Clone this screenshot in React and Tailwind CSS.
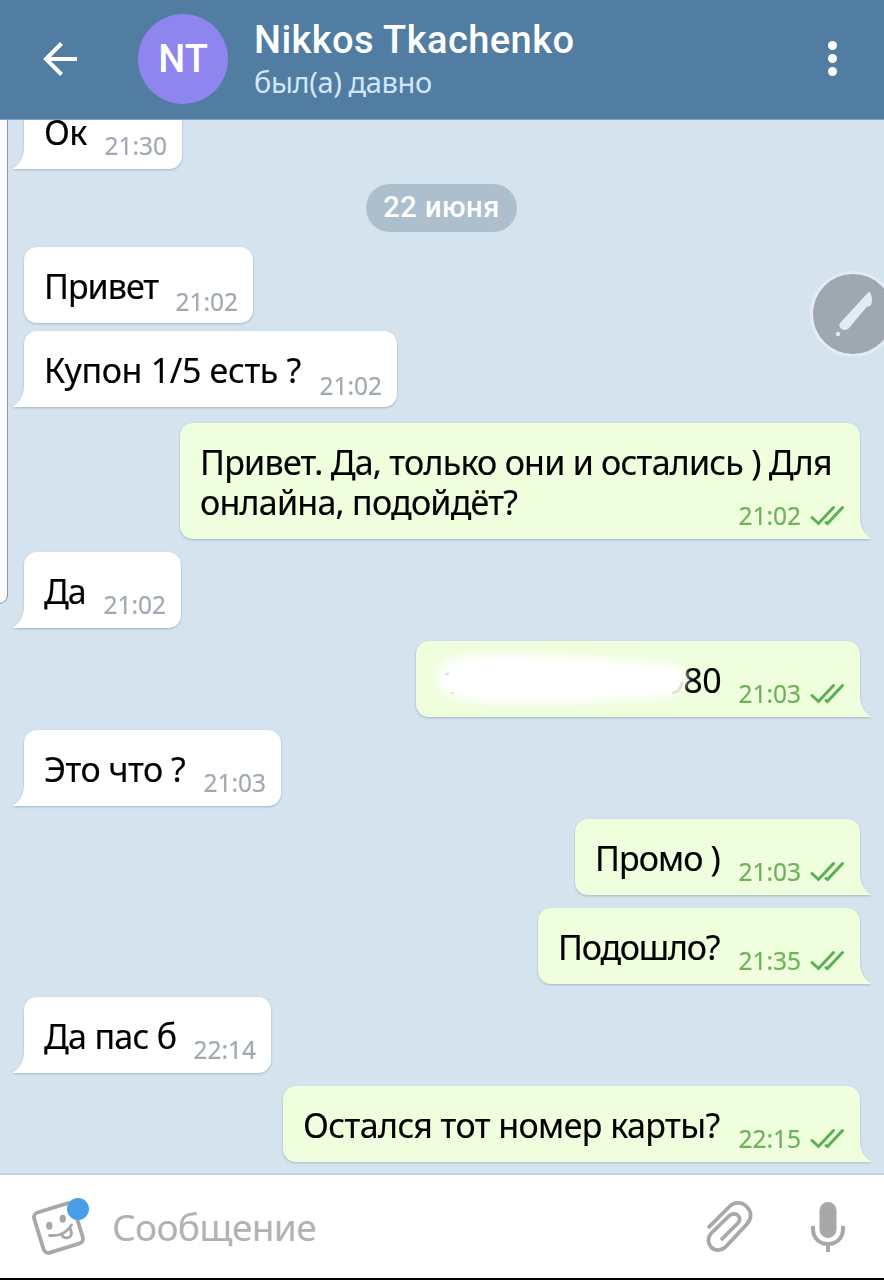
import React from 'react';

const messages = [
  { id: 1, text: 'Привет', time: '21:02', box: 'mt-[15px] w-[229px] h-[76px] tracking-[-1px]', low: true },
  { id: 2, text: 'Купон 1/5 есть ?', time: '21:02', tail: true, box: 'mt-[8px] w-[373px] h-[76px] tracking-[-0.35px]', low: true },
  { id: 3, text: 'Привет. Да, только они и остались ) Для онлайна, подойдёт?', time: '21:02', out: true, tail: true, wide: true, box: 'mt-[16px] w-[680px] h-[116px] tracking-[-0.75px]' },
  { id: 4, text: 'Да', time: '21:02', tail: true, box: 'mt-[13px] w-[157px] h-[76px] tracking-[-1px]' },
  { id: 5, text: '80', time: '21:03', out: true, tail: true, hidden: true, box: 'mt-[13px] w-[444px] h-[76px] tracking-[-0.4px]' },
  { id: 6, text: 'Это что ?', time: '21:03', tail: true, box: 'mt-[13px] w-[257px] h-[76px] tracking-[-0.5px]' },
  { id: 7, text: 'Промо )', time: '21:03', out: true, tail: true, box: 'mt-[13px] w-[285px] h-[76px] tracking-[-0.9px]' },
  { id: 8, text: 'Подошло?', time: '21:35', out: true, tail: true, box: 'mt-[13px] w-[322px] h-[76px] tracking-[-1.2px]' },
  { id: 9, text: 'Да пас б', time: '22:14', tail: true, box: 'mt-[13px] w-[247px] h-[76px] tracking-[-0.7px]' },
  { id: 10, text: 'Остался тот номер карты?', time: '22:15', out: true, tail: true, box: 'mt-[13px] w-[577px] h-[76px] tracking-[-0.58px]' },
];

const Checks = () => (
  <svg width="35" height="22" viewBox="0 0 35 22" fill="none" stroke="#5bb055" strokeWidth="3" strokeLinecap="round" className="ml-[9px] mb-[1px]">
    <path d="M2 12.500 L8.500 18.500 L23.500 2.500" />
    <path d="M16 17.500 L17.500 18.500 L32.500 2.500" />
  </svg>
);

const Tail = ({ out }) => (
  <svg
    width="13"
    height="22"
    viewBox="0 0 13 22"
    className={out ? 'absolute -right-[12px] bottom-0' : 'absolute -left-[12px] bottom-0 -scale-x-100'}
  >
    <path d="M0 0 H1 C1 10 5 17 12.5 22 H0 Z" fill={out ? '#effedd' : '#ffffff'} />
  </svg>
);

// White smear that covers the promo code
const Smear = () => (
  <svg width="290" height="76" viewBox="0 0 290 76" className="absolute left-[6px] top-0">
    <defs>
      <filter id="smear" x="-10%" y="-30%" width="120%" height="160%">
        <feGaussianBlur stdDeviation="4.5" />
      </filter>
    </defs>
    <path d="M27 19 C60 10 100 13 150 16 C200 19 245 19 262 29 C270 39 262 54 238 57 C190 60 90 65 50 60 C20 55 12 46 15 36 C17 28 20 21 27 19 Z" fill="#fff" filter="url(#smear)" />
    <path d="M250 52 Q259 51 260 41" fill="none" stroke="#777" strokeOpacity=".2" strokeWidth="3" />
    <path d="M23 34 L27 32" stroke="#999" strokeOpacity=".3" strokeWidth="2" />
    <path d="M29 52 h3" stroke="#999" strokeOpacity=".25" strokeWidth="2" />
  </svg>
);

const Message = ({ msg }) => {
  const { out, tail } = msg;
  const corner = !tail ? '' : out ? 'rounded-br-none' : 'rounded-bl-none';

  return (
    <div className={`flex px-6 ${out ? 'justify-end' : ''}`}>
      <div
        className={`relative flex justify-between rounded-[13px] pl-[20px] pr-[15px] drop-shadow-[0_1.5px_0.8px_rgba(110,140,160,0.5)] ${corner} ${out ? 'bg-[#effedd]' : 'bg-white'} ${msg.box}`}
      >
        <p className={`pt-[19px] text-[34px] leading-[40px] text-black [-webkit-text-stroke:0.15px_black] ${msg.wide ? 'w-[640px] shrink-0' : 'whitespace-nowrap'} ${msg.hidden ? 'ml-auto mr-[17px]' : ''}`}>
          {msg.text}
        </p>
        {msg.hidden && <Smear />}
        <div className={`flex items-end self-end text-[24.5px] leading-[24px] tracking-normal whitespace-nowrap ${msg.low ? 'pb-[9px]' : 'pb-[11px]'} ${msg.wide ? '-ml-[200px]' : ''} ${out ? 'text-[#70b15c] [-webkit-text-stroke:0.2px_#70b15c]' : 'text-[#a1aab3] [-webkit-text-stroke:0.2px_#a1aab3]'}`}>
          <span>{msg.time}</span>
          {out && <Checks />}
        </div>
        {tail && <Tail out={out} />}
      </div>
    </div>
  );
};

const Header = () => (
  <header className="relative z-10 flex h-[120px] shrink-0 items-center border-b border-[#7d9fba] bg-[#517da2] pr-[47px] pb-[2px] font-['Roboto',sans-serif] text-white">
    <svg width="36" height="36" viewBox="0 0 36 36" fill="none" stroke="#fff" strokeWidth="4" className="ml-[42px]">
      <path d="M35 18 H4 M19.5 2.5 L4 18 L19.5 33.5" />
    </svg>
    <div className="ml-[60px] flex h-[90px] w-[90px] items-center justify-center rounded-full bg-[#8e85ee] pt-[2px] text-[38px] font-medium">
      NT
    </div>
    <div className="ml-[26px] flex-1 pt-[3px]">
      <h1 className="text-[38px] leading-[44px] font-medium tracking-[0.45px] whitespace-nowrap">Nikkos Tkachenko</h1>
      <p className="text-[29px] leading-[40px] tracking-[-0.4px] text-[#d0e7fb] font-['Noto_Sans',sans-serif]">был(а) давно</p>
    </div>
    <div className="flex flex-col gap-[4px]">
      <span className="h-[9px] w-[9px] rounded-full bg-white" />
      <span className="h-[9px] w-[9px] rounded-full bg-white" />
      <span className="h-[9px] w-[9px] rounded-full bg-white" />
    </div>
  </header>
);

const PenButton = () => (
  <div className="absolute top-[151px] left-[810px] h-[86px] w-[86px] rounded-full border-[3px] border-[#e3ecf4] bg-[#9fa8b1]">
    <svg width="80" height="80" viewBox="0 0 80 80" fill="#e3ecf4">
      <path d="M56 17.500 C59 20 59.500 26 58.500 29.500 C58 32 56 32.500 54 32.500 L36 54 C31 59 23.500 53.500 27.500 48.500 Z" />
      <circle cx="25" cy="60" r="2.200" />
    </svg>
  </div>
);

const Composer = () => (
  <footer className="flex h-[107px] shrink-0 items-center border-t-2 border-b-2 border-t-[#c5d3df] border-b-black bg-white">
    <svg width="60" height="60" viewBox="0 0 60 60" fill="none" stroke="#a8a8a8" strokeWidth="3.8" strokeLinecap="round" className="ml-[31px]">
      <rect x="7" y="10" width="41" height="42" rx="5" transform="rotate(-17 27.500 31)" />
      <path d="M18.500 38.500 Q33 40 40.500 28" strokeWidth="2.800" />
      <path d="M31 38 C33 43 40.500 41 40.500 36 L39.500 32" strokeWidth="2.800" />
      <ellipse cx="18.300" cy="28.700" rx="3.200" ry="4" fill="#a8a8a8" stroke="none" />
      <ellipse cx="31.800" cy="21.700" rx="3.200" ry="4" fill="#a8a8a8" stroke="none" />
      <circle cx="47" cy="12" r="11" fill="#489fe8" stroke="none" />
    </svg>
    <span className="ml-[21px] flex-1 text-[37px] leading-[50px] tracking-[-0.6px] text-[#b2b2b2]">Сообщение</span>
    <svg width="48" height="54" viewBox="0 0 48 54" fill="none" stroke="#a8a8a8" strokeWidth="3.800" className="mr-[56px]">
      <path d="M2 28 L22.500 7.500 C28 1.500 36 1.500 41 7 C46 12 45.500 19 41 24 L20.500 46 C15.500 51.500 8.500 51 5 47 C1.500 43 1.500 37.500 5 33.500 L22.500 16.500 C26 13 30 13.500 32 15.500 C34.500 18 34 21 32 23 L15 40" />
    </svg>
    <svg width="36" height="52" viewBox="0 0 36 52" fill="none" stroke="#a8a8a8" strokeWidth="4" className="mr-[38px]">
      <rect x="9.500" y="1" width="17" height="36" rx="8.500" fill="#a8a8a8" stroke="none" />
      <path d="M3 25 V28 C3 48 33 48 33 28 V25 M18 43 V51" />
    </svg>
  </footer>
);

export default function App() {
  return (
    <div className="flex h-[1280px] w-[884px] flex-col overflow-hidden bg-[#d5e3ee] font-['Noto_Sans',sans-serif]">
      <Header />
      <main className="relative h-[1053px] shrink-0 overflow-hidden">
        {/* Edge panel handle */}
        <div className="absolute -left-[4px] -top-[10px] h-[494px] w-[12px] rounded-br-[9px] border border-[#8998a4] bg-[#fafbfc]" />
        <div className="-mt-[27px]">
          <Message msg={{ id: 0, text: 'Ок', time: '21:30', tail: true, box: 'w-[158px] h-[76px] tracking-[-0.5px]' }} />
        </div>
        <div className="ml-[366px] mt-[15px] flex h-[48px] w-[151px] items-center justify-center rounded-full bg-[#adbfcd] font-['Roboto',sans-serif] text-[29px] font-medium tracking-[0.5px] text-white">
          22 июня
        </div>
        {messages.map(m => <Message key={m.id} msg={m} />)}
        <PenButton />
      </main>
      <Composer />
    </div>
  );
}
